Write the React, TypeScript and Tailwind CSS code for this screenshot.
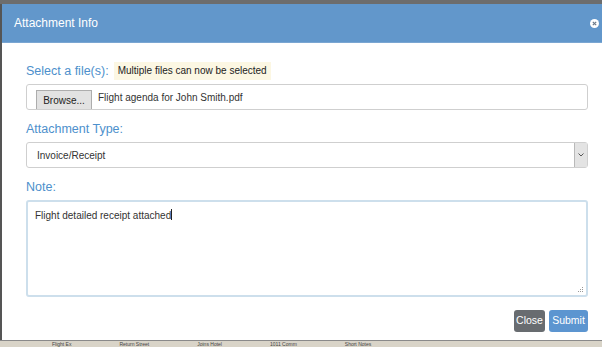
import React from "react";

export default function App() {
  return (
    <div className="w-[602px] h-[347px] bg-[#5f5f5f] overflow-hidden flex flex-col" style={{ fontFamily: '"Liberation Sans", Arial, sans-serif' }}>
      <div className="h-[4px] bg-[#6d6d6d] shrink-0" />
      <div className="flex-1 flex flex-col border-l-2 border-[#555] bg-white">
        <div className="h-[39px] shrink-0 bg-[#6297cb] flex items-center justify-between pl-[12px] pr-[3px] border-b border-[#7aa6d2]">
          <span className="text-white text-[12px]">Attachment Info</span>
          <span className="w-[9px] h-[9px] rounded-full bg-white flex items-center justify-center">
            <svg width="5" height="5" viewBox="0 0 5 5"><path d="M0.8 0.8 L4.2 4.2 M4.2 0.8 L0.8 4.2" stroke="#6b7a8a" strokeWidth="1.2" /></svg>
          </span>
        </div>
        <div className="flex flex-col pl-[24px] pr-[14px]">
          <div className="flex items-center gap-[5px] mt-[20px] h-[16px]">
            <span className="text-[12.5px] leading-[16px] text-[#4d90cc]">Select a file(s):</span>
            <span className="text-[10px] leading-[12px] text-[#222] bg-[#fcf7e3] px-[4px] py-[3px]">Multiple files can now be selected</span>
          </div>
          <div className="mt-[5px] h-[26px] border border-[#cfcfcf] rounded-[3px] flex items-end pl-[9px]">
            <span className="h-[19px] w-[56px] bg-[#e2e2e2] border border-[#adadad] border-b-0 text-[10px] text-[#222] flex items-center justify-center">Browse...</span>
            <span className="text-[10px] text-[#333] ml-[6px] mb-[4px]">Flight agenda for John Smith.pdf</span>
          </div>
          <div className="mt-[11px] text-[12.5px] text-[#4d90cc] leading-[16px]">Attachment Type:</div>
          <div className="mt-[5px] h-[26px] border border-[#cfcfcf] rounded-[3px] flex items-center justify-between pl-[10px]">
            <span className="text-[10px] text-[#333]">Invoice/Receipt</span>
            <span className="w-[13px] h-[24px] bg-[#e3e3e3] border-l border-[#b9b9b9] flex items-center justify-center">
              <svg width="6" height="4" viewBox="0 0 6 4"><path d="M0.5 0.5 L3 3 L5.5 0.5" stroke="#555" strokeWidth="1" fill="none" /></svg>
            </span>
          </div>
          <div className="mt-[11px] text-[12.5px] text-[#4d90cc] leading-[16px]">Note:</div>
          <div className="mt-[5px] h-[97px] border-2 border-[#cddfec] rounded-[3px] relative pl-[7px] pt-[5px] leading-[14px]">
            <span className="text-[10px] text-[#333]">Flight detailed receipt attached</span>
            <span className="inline-block w-[1px] h-[11px] bg-[#222] align-middle" />
            <svg className="absolute right-[2px] bottom-[2px]" width="6" height="6" viewBox="0 0 6 6">
              <rect x="4" y="0" width="1" height="1" fill="#999" />
              <rect x="2" y="2" width="1" height="1" fill="#999" />
              <rect x="4" y="2" width="1" height="1" fill="#999" />
              <rect x="0" y="4" width="1" height="1" fill="#999" />
              <rect x="2" y="4" width="1" height="1" fill="#999" />
              <rect x="4" y="4" width="1" height="1" fill="#999" />
            </svg>
          </div>
          <div className="mt-[13px] flex justify-end gap-[4px]">
            <span className="h-[22px] w-[31px] bg-[#686c70] rounded-[3px] text-white text-[10.5px] flex items-center justify-center">Close</span>
            <span className="h-[22px] w-[39px] bg-[#5c95d0] rounded-[3px] text-white text-[10.5px] flex items-center justify-center">Submit</span>
          </div>
        </div>
      </div>
      <div className="h-[7px] shrink-0 bg-[#d9d4c8] border-t border-[#8a8a8a] flex items-center gap-[48px] pl-[52px] text-[5px] leading-[6px] text-[#444] overflow-hidden">
        <span>Flight Ex</span>
        <span>Return Street</span>
        <span>Joins Hotel</span>
        <span>1011 Comm</span>
        <span>Short Notes</span>
      </div>
    </div>
  );
}
